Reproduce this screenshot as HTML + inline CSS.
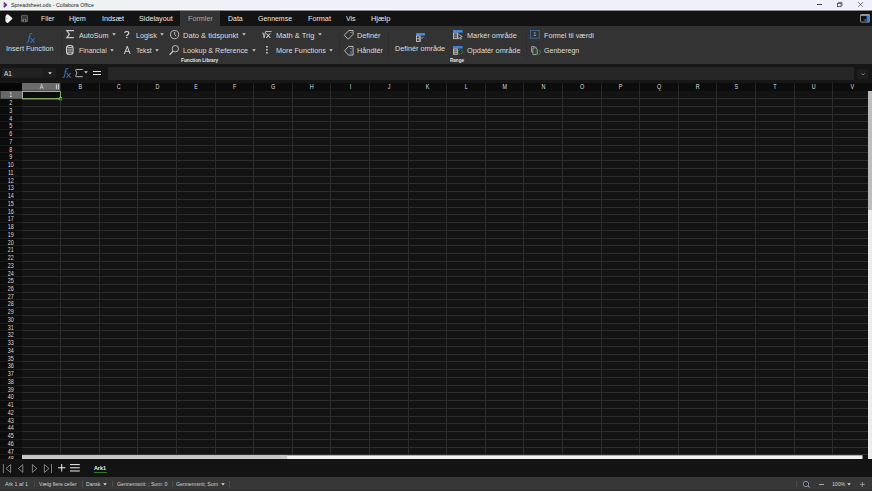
<!DOCTYPE html><html><head><meta charset="utf-8"><style>
*{margin:0;padding:0;box-sizing:border-box}
html,body{width:872px;height:491px;overflow:hidden;background:#131313;font-family:"Liberation Sans",sans-serif}
.a{position:absolute;white-space:nowrap;line-height:1;transform-origin:0 0}
.hd{font-family:"Liberation Sans",sans-serif;font-size:6.8px;fill:#dcdcdc}
.rn{font-family:"Liberation Sans",sans-serif;font-size:6.3px;fill:#dedede}
.sep{position:absolute;width:1px;background:#2e2e2e}
svg.i{position:absolute;overflow:visible}
</style></head><body>
<svg width="872" height="491" style="position:absolute;left:0;top:0"><rect x="22" y="91" width="846" height="368" fill="#131313"/><rect x="22" y="98" width="846" height="1" fill="#2d2d2d"/><rect x="22" y="106" width="846" height="1" fill="#2d2d2d"/><rect x="22" y="114" width="846" height="1" fill="#2d2d2d"/><rect x="22" y="121" width="846" height="1" fill="#2d2d2d"/><rect x="22" y="129" width="846" height="1" fill="#2d2d2d"/><rect x="22" y="137" width="846" height="1" fill="#2d2d2d"/><rect x="22" y="145" width="846" height="1" fill="#2d2d2d"/><rect x="22" y="152" width="846" height="1" fill="#2d2d2d"/><rect x="22" y="160" width="846" height="1" fill="#2d2d2d"/><rect x="22" y="168" width="846" height="1" fill="#2d2d2d"/><rect x="22" y="176" width="846" height="1" fill="#2d2d2d"/><rect x="22" y="183" width="846" height="1" fill="#2d2d2d"/><rect x="22" y="191" width="846" height="1" fill="#2d2d2d"/><rect x="22" y="199" width="846" height="1" fill="#2d2d2d"/><rect x="22" y="207" width="846" height="1" fill="#2d2d2d"/><rect x="22" y="214" width="846" height="1" fill="#2d2d2d"/><rect x="22" y="222" width="846" height="1" fill="#2d2d2d"/><rect x="22" y="230" width="846" height="1" fill="#2d2d2d"/><rect x="22" y="238" width="846" height="1" fill="#2d2d2d"/><rect x="22" y="245" width="846" height="1" fill="#2d2d2d"/><rect x="22" y="253" width="846" height="1" fill="#2d2d2d"/><rect x="22" y="261" width="846" height="1" fill="#2d2d2d"/><rect x="22" y="269" width="846" height="1" fill="#2d2d2d"/><rect x="22" y="276" width="846" height="1" fill="#2d2d2d"/><rect x="22" y="284" width="846" height="1" fill="#2d2d2d"/><rect x="22" y="292" width="846" height="1" fill="#2d2d2d"/><rect x="22" y="299" width="846" height="1" fill="#2d2d2d"/><rect x="22" y="307" width="846" height="1" fill="#2d2d2d"/><rect x="22" y="315" width="846" height="1" fill="#2d2d2d"/><rect x="22" y="323" width="846" height="1" fill="#2d2d2d"/><rect x="22" y="330" width="846" height="1" fill="#2d2d2d"/><rect x="22" y="338" width="846" height="1" fill="#2d2d2d"/><rect x="22" y="346" width="846" height="1" fill="#2d2d2d"/><rect x="22" y="354" width="846" height="1" fill="#2d2d2d"/><rect x="22" y="361" width="846" height="1" fill="#2d2d2d"/><rect x="22" y="369" width="846" height="1" fill="#2d2d2d"/><rect x="22" y="377" width="846" height="1" fill="#2d2d2d"/><rect x="22" y="385" width="846" height="1" fill="#2d2d2d"/><rect x="22" y="392" width="846" height="1" fill="#2d2d2d"/><rect x="22" y="400" width="846" height="1" fill="#2d2d2d"/><rect x="22" y="408" width="846" height="1" fill="#2d2d2d"/><rect x="22" y="416" width="846" height="1" fill="#2d2d2d"/><rect x="22" y="423" width="846" height="1" fill="#2d2d2d"/><rect x="22" y="431" width="846" height="1" fill="#2d2d2d"/><rect x="22" y="439" width="846" height="1" fill="#2d2d2d"/><rect x="22" y="447" width="846" height="1" fill="#2d2d2d"/><rect x="22" y="454" width="846" height="1" fill="#2d2d2d"/><rect x="60" y="91" width="1" height="368" fill="#2d2d2d"/><rect x="99" y="91" width="1" height="368" fill="#2d2d2d"/><rect x="137" y="91" width="1" height="368" fill="#2d2d2d"/><rect x="176" y="91" width="1" height="368" fill="#2d2d2d"/><rect x="215" y="91" width="1" height="368" fill="#2d2d2d"/><rect x="253" y="91" width="1" height="368" fill="#2d2d2d"/><rect x="292" y="91" width="1" height="368" fill="#2d2d2d"/><rect x="330" y="91" width="1" height="368" fill="#2d2d2d"/><rect x="369" y="91" width="1" height="368" fill="#2d2d2d"/><rect x="408" y="91" width="1" height="368" fill="#2d2d2d"/><rect x="446" y="91" width="1" height="368" fill="#2d2d2d"/><rect x="485" y="91" width="1" height="368" fill="#2d2d2d"/><rect x="523" y="91" width="1" height="368" fill="#2d2d2d"/><rect x="562" y="91" width="1" height="368" fill="#2d2d2d"/><rect x="601" y="91" width="1" height="368" fill="#2d2d2d"/><rect x="639" y="91" width="1" height="368" fill="#2d2d2d"/><rect x="678" y="91" width="1" height="368" fill="#2d2d2d"/><rect x="716" y="91" width="1" height="368" fill="#2d2d2d"/><rect x="755" y="91" width="1" height="368" fill="#2d2d2d"/><rect x="794" y="91" width="1" height="368" fill="#2d2d2d"/><rect x="832" y="91" width="1" height="368" fill="#2d2d2d"/><rect x="0" y="83" width="872" height="8" fill="#0c0c0c"/><rect x="0" y="83" width="22" height="8" fill="#060606"/><rect x="0" y="91" width="22" height="368" fill="#0c0c0c"/><rect x="22" y="83" width="38.60" height="7.7" fill="#6b6b6b"/><rect x="60" y="83" width="1" height="8" fill="#242424"/><rect x="99" y="83" width="1" height="8" fill="#242424"/><rect x="137" y="83" width="1" height="8" fill="#242424"/><rect x="176" y="83" width="1" height="8" fill="#242424"/><rect x="215" y="83" width="1" height="8" fill="#242424"/><rect x="253" y="83" width="1" height="8" fill="#242424"/><rect x="292" y="83" width="1" height="8" fill="#242424"/><rect x="330" y="83" width="1" height="8" fill="#242424"/><rect x="369" y="83" width="1" height="8" fill="#242424"/><rect x="408" y="83" width="1" height="8" fill="#242424"/><rect x="446" y="83" width="1" height="8" fill="#242424"/><rect x="485" y="83" width="1" height="8" fill="#242424"/><rect x="523" y="83" width="1" height="8" fill="#242424"/><rect x="562" y="83" width="1" height="8" fill="#242424"/><rect x="601" y="83" width="1" height="8" fill="#242424"/><rect x="639" y="83" width="1" height="8" fill="#242424"/><rect x="678" y="83" width="1" height="8" fill="#242424"/><rect x="716" y="83" width="1" height="8" fill="#242424"/><rect x="755" y="83" width="1" height="8" fill="#242424"/><rect x="794" y="83" width="1" height="8" fill="#242424"/><rect x="832" y="83" width="1" height="8" fill="#242424"/><rect x="0" y="98" width="22" height="1" fill="#1a1a1a"/><rect x="0" y="106" width="22" height="1" fill="#1a1a1a"/><rect x="0" y="114" width="22" height="1" fill="#1a1a1a"/><rect x="0" y="121" width="22" height="1" fill="#1a1a1a"/><rect x="0" y="129" width="22" height="1" fill="#1a1a1a"/><rect x="0" y="137" width="22" height="1" fill="#1a1a1a"/><rect x="0" y="145" width="22" height="1" fill="#1a1a1a"/><rect x="0" y="152" width="22" height="1" fill="#1a1a1a"/><rect x="0" y="160" width="22" height="1" fill="#1a1a1a"/><rect x="0" y="168" width="22" height="1" fill="#1a1a1a"/><rect x="0" y="176" width="22" height="1" fill="#1a1a1a"/><rect x="0" y="183" width="22" height="1" fill="#1a1a1a"/><rect x="0" y="191" width="22" height="1" fill="#1a1a1a"/><rect x="0" y="199" width="22" height="1" fill="#1a1a1a"/><rect x="0" y="207" width="22" height="1" fill="#1a1a1a"/><rect x="0" y="214" width="22" height="1" fill="#1a1a1a"/><rect x="0" y="222" width="22" height="1" fill="#1a1a1a"/><rect x="0" y="230" width="22" height="1" fill="#1a1a1a"/><rect x="0" y="238" width="22" height="1" fill="#1a1a1a"/><rect x="0" y="245" width="22" height="1" fill="#1a1a1a"/><rect x="0" y="253" width="22" height="1" fill="#1a1a1a"/><rect x="0" y="261" width="22" height="1" fill="#1a1a1a"/><rect x="0" y="269" width="22" height="1" fill="#1a1a1a"/><rect x="0" y="276" width="22" height="1" fill="#1a1a1a"/><rect x="0" y="284" width="22" height="1" fill="#1a1a1a"/><rect x="0" y="292" width="22" height="1" fill="#1a1a1a"/><rect x="0" y="299" width="22" height="1" fill="#1a1a1a"/><rect x="0" y="307" width="22" height="1" fill="#1a1a1a"/><rect x="0" y="315" width="22" height="1" fill="#1a1a1a"/><rect x="0" y="323" width="22" height="1" fill="#1a1a1a"/><rect x="0" y="330" width="22" height="1" fill="#1a1a1a"/><rect x="0" y="338" width="22" height="1" fill="#1a1a1a"/><rect x="0" y="346" width="22" height="1" fill="#1a1a1a"/><rect x="0" y="354" width="22" height="1" fill="#1a1a1a"/><rect x="0" y="361" width="22" height="1" fill="#1a1a1a"/><rect x="0" y="369" width="22" height="1" fill="#1a1a1a"/><rect x="0" y="377" width="22" height="1" fill="#1a1a1a"/><rect x="0" y="385" width="22" height="1" fill="#1a1a1a"/><rect x="0" y="392" width="22" height="1" fill="#1a1a1a"/><rect x="0" y="400" width="22" height="1" fill="#1a1a1a"/><rect x="0" y="408" width="22" height="1" fill="#1a1a1a"/><rect x="0" y="416" width="22" height="1" fill="#1a1a1a"/><rect x="0" y="423" width="22" height="1" fill="#1a1a1a"/><rect x="0" y="431" width="22" height="1" fill="#1a1a1a"/><rect x="0" y="439" width="22" height="1" fill="#1a1a1a"/><rect x="0" y="447" width="22" height="1" fill="#1a1a1a"/><rect x="0" y="454" width="22" height="1" fill="#1a1a1a"/><text x="0" y="89.1" text-anchor="middle" class="hd" transform="translate(41.60 0) scale(0.8 1)">A</text><text x="0" y="89.1" text-anchor="middle" class="hd" transform="translate(80.20 0) scale(0.8 1)">B</text><text x="0" y="89.1" text-anchor="middle" class="hd" transform="translate(118.80 0) scale(0.8 1)">C</text><text x="0" y="89.1" text-anchor="middle" class="hd" transform="translate(157.40 0) scale(0.8 1)">D</text><text x="0" y="89.1" text-anchor="middle" class="hd" transform="translate(196.00 0) scale(0.8 1)">E</text><text x="0" y="89.1" text-anchor="middle" class="hd" transform="translate(234.60 0) scale(0.8 1)">F</text><text x="0" y="89.1" text-anchor="middle" class="hd" transform="translate(273.20 0) scale(0.8 1)">G</text><text x="0" y="89.1" text-anchor="middle" class="hd" transform="translate(311.80 0) scale(0.8 1)">H</text><text x="0" y="89.1" text-anchor="middle" class="hd" transform="translate(350.40 0) scale(0.8 1)">I</text><text x="0" y="89.1" text-anchor="middle" class="hd" transform="translate(389.00 0) scale(0.8 1)">J</text><text x="0" y="89.1" text-anchor="middle" class="hd" transform="translate(427.60 0) scale(0.8 1)">K</text><text x="0" y="89.1" text-anchor="middle" class="hd" transform="translate(466.20 0) scale(0.8 1)">L</text><text x="0" y="89.1" text-anchor="middle" class="hd" transform="translate(504.80 0) scale(0.8 1)">M</text><text x="0" y="89.1" text-anchor="middle" class="hd" transform="translate(543.40 0) scale(0.8 1)">N</text><text x="0" y="89.1" text-anchor="middle" class="hd" transform="translate(582.00 0) scale(0.8 1)">O</text><text x="0" y="89.1" text-anchor="middle" class="hd" transform="translate(620.60 0) scale(0.8 1)">P</text><text x="0" y="89.1" text-anchor="middle" class="hd" transform="translate(659.20 0) scale(0.8 1)">Q</text><text x="0" y="89.1" text-anchor="middle" class="hd" transform="translate(697.80 0) scale(0.8 1)">R</text><text x="0" y="89.1" text-anchor="middle" class="hd" transform="translate(736.40 0) scale(0.8 1)">S</text><text x="0" y="89.1" text-anchor="middle" class="hd" transform="translate(775.00 0) scale(0.8 1)">T</text><text x="0" y="89.1" text-anchor="middle" class="hd" transform="translate(813.60 0) scale(0.8 1)">U</text><text x="0" y="89.1" text-anchor="middle" class="hd" transform="translate(852.20 0) scale(0.8 1)">V</text><text x="0" y="97.50" text-anchor="middle" class="rn" transform="translate(10.7 0) scale(0.86 1)">1</text><text x="0" y="105.24" text-anchor="middle" class="rn" transform="translate(10.7 0) scale(0.86 1)">2</text><text x="0" y="112.98" text-anchor="middle" class="rn" transform="translate(10.7 0) scale(0.86 1)">3</text><text x="0" y="120.72" text-anchor="middle" class="rn" transform="translate(10.7 0) scale(0.86 1)">4</text><text x="0" y="128.46" text-anchor="middle" class="rn" transform="translate(10.7 0) scale(0.86 1)">5</text><text x="0" y="136.20" text-anchor="middle" class="rn" transform="translate(10.7 0) scale(0.86 1)">6</text><text x="0" y="143.94" text-anchor="middle" class="rn" transform="translate(10.7 0) scale(0.86 1)">7</text><text x="0" y="151.68" text-anchor="middle" class="rn" transform="translate(10.7 0) scale(0.86 1)">8</text><text x="0" y="159.42" text-anchor="middle" class="rn" transform="translate(10.7 0) scale(0.86 1)">9</text><text x="0" y="167.16" text-anchor="middle" class="rn" transform="translate(10.7 0) scale(0.86 1)">10</text><text x="0" y="174.90" text-anchor="middle" class="rn" transform="translate(10.7 0) scale(0.86 1)">11</text><text x="0" y="182.64" text-anchor="middle" class="rn" transform="translate(10.7 0) scale(0.86 1)">12</text><text x="0" y="190.38" text-anchor="middle" class="rn" transform="translate(10.7 0) scale(0.86 1)">13</text><text x="0" y="198.12" text-anchor="middle" class="rn" transform="translate(10.7 0) scale(0.86 1)">14</text><text x="0" y="205.86" text-anchor="middle" class="rn" transform="translate(10.7 0) scale(0.86 1)">15</text><text x="0" y="213.60" text-anchor="middle" class="rn" transform="translate(10.7 0) scale(0.86 1)">16</text><text x="0" y="221.34" text-anchor="middle" class="rn" transform="translate(10.7 0) scale(0.86 1)">17</text><text x="0" y="229.08" text-anchor="middle" class="rn" transform="translate(10.7 0) scale(0.86 1)">18</text><text x="0" y="236.82" text-anchor="middle" class="rn" transform="translate(10.7 0) scale(0.86 1)">19</text><text x="0" y="244.56" text-anchor="middle" class="rn" transform="translate(10.7 0) scale(0.86 1)">20</text><text x="0" y="252.30" text-anchor="middle" class="rn" transform="translate(10.7 0) scale(0.86 1)">21</text><text x="0" y="260.04" text-anchor="middle" class="rn" transform="translate(10.7 0) scale(0.86 1)">22</text><text x="0" y="267.78" text-anchor="middle" class="rn" transform="translate(10.7 0) scale(0.86 1)">23</text><text x="0" y="275.52" text-anchor="middle" class="rn" transform="translate(10.7 0) scale(0.86 1)">24</text><text x="0" y="283.26" text-anchor="middle" class="rn" transform="translate(10.7 0) scale(0.86 1)">25</text><text x="0" y="291.00" text-anchor="middle" class="rn" transform="translate(10.7 0) scale(0.86 1)">26</text><text x="0" y="298.74" text-anchor="middle" class="rn" transform="translate(10.7 0) scale(0.86 1)">27</text><text x="0" y="306.48" text-anchor="middle" class="rn" transform="translate(10.7 0) scale(0.86 1)">28</text><text x="0" y="314.22" text-anchor="middle" class="rn" transform="translate(10.7 0) scale(0.86 1)">29</text><text x="0" y="321.96" text-anchor="middle" class="rn" transform="translate(10.7 0) scale(0.86 1)">30</text><text x="0" y="329.70" text-anchor="middle" class="rn" transform="translate(10.7 0) scale(0.86 1)">31</text><text x="0" y="337.44" text-anchor="middle" class="rn" transform="translate(10.7 0) scale(0.86 1)">32</text><text x="0" y="345.18" text-anchor="middle" class="rn" transform="translate(10.7 0) scale(0.86 1)">33</text><text x="0" y="352.92" text-anchor="middle" class="rn" transform="translate(10.7 0) scale(0.86 1)">34</text><text x="0" y="360.66" text-anchor="middle" class="rn" transform="translate(10.7 0) scale(0.86 1)">35</text><text x="0" y="368.40" text-anchor="middle" class="rn" transform="translate(10.7 0) scale(0.86 1)">36</text><text x="0" y="376.14" text-anchor="middle" class="rn" transform="translate(10.7 0) scale(0.86 1)">37</text><text x="0" y="383.88" text-anchor="middle" class="rn" transform="translate(10.7 0) scale(0.86 1)">38</text><text x="0" y="391.62" text-anchor="middle" class="rn" transform="translate(10.7 0) scale(0.86 1)">39</text><text x="0" y="399.36" text-anchor="middle" class="rn" transform="translate(10.7 0) scale(0.86 1)">40</text><text x="0" y="407.10" text-anchor="middle" class="rn" transform="translate(10.7 0) scale(0.86 1)">41</text><text x="0" y="414.84" text-anchor="middle" class="rn" transform="translate(10.7 0) scale(0.86 1)">42</text><text x="0" y="422.58" text-anchor="middle" class="rn" transform="translate(10.7 0) scale(0.86 1)">43</text><text x="0" y="430.32" text-anchor="middle" class="rn" transform="translate(10.7 0) scale(0.86 1)">44</text><text x="0" y="438.06" text-anchor="middle" class="rn" transform="translate(10.7 0) scale(0.86 1)">45</text><text x="0" y="445.80" text-anchor="middle" class="rn" transform="translate(10.7 0) scale(0.86 1)">46</text><text x="0" y="453.54" text-anchor="middle" class="rn" transform="translate(10.7 0) scale(0.86 1)">47</text><text x="0" y="461.28" text-anchor="middle" class="rn" transform="translate(10.7 0) scale(0.86 1)">48</text><rect x="55.9" y="84.3" width="1.1" height="4.8" fill="#c8c8c8"/><rect x="57.9" y="84.3" width="1.1" height="4.8" fill="#c8c8c8"/><rect x="0.5" y="91" width="21.5" height="7.8" fill="#686868"/><text x="0" y="97.50" text-anchor="middle" class="rn" transform="translate(10.7 0) scale(0.86 1)">1</text><rect x="22" y="91" width="38.6" height="8" fill="#0b0b0b"/><rect x="22" y="91" width="38.6" height="1" fill="#a7aba4"/><rect x="22" y="91" width="1" height="7.5" fill="#a7aba4"/><rect x="60" y="91.6" width="1" height="6.6" fill="#86ae70"/><rect x="22" y="98" width="38" height="1" fill="#7fa868"/><rect x="22" y="99" width="38" height="1" fill="#2f6a20"/><rect x="58.9" y="97.1" width="3.3" height="3.4" rx="0.6" fill="#2a7a1a"/><path d="M59.2 100.2 V97.9 Q59.2 97.4 59.8 97.4 H62" fill="none" stroke="#c9cfc6" stroke-width="0.6"/><rect x="868" y="91" width="4" height="368" fill="#ececec"/><rect x="868" y="91" width="4" height="119" fill="#bdbdbd"/><rect x="22" y="455.3" width="840.5" height="3.7" fill="#f2f2f2"/><rect x="22" y="455.3" width="265.2" height="3.7" fill="#c6c9c6"/></svg>
<div class="a" style="left:0;top:0;width:872px;height:10px;background:linear-gradient(90deg,#edf2ee 0%,#eef2f5 14%,#eef1fa 45%,#eef1fb 100%)"></div>
<div class="a" style="left:0;top:9px;width:872px;height:1px;background:#f6f8fc"></div>
<div class="a" style="left:0;top:10px;width:872px;height:1px;background:#8a8a8a"></div>
<svg class="i" style="left:2.5px;top:2px" width="5" height="6" viewBox="0 0 5 6"><path d="M1.3 0.1 L4.5 2.95 L1.3 5.8 L0.3 4.7 L1.4 2.95 L0.3 1.2 Z" fill="#6a2a92"/><path d="M0.4 1.3 L1.5 2.95 L0.4 4.6 Z" fill="#b7b0c2"/></svg>
<div class="a" style="left:10.90px;top:1.90px;font-size:6.2px;color:#1e1e1e;transform:scaleX(0.859);">Spreadsheet.ods - Collabora Office</div>
<div class="a" style="left:817px;top:4.1px;width:5px;height:0.8px;background:#444"></div>
<svg class="i" style="left:837px;top:2.4px" width="6" height="5" viewBox="0 0 6 5"><rect x="0.45" y="1.35" width="3.6" height="3.3" fill="none" stroke="#444" stroke-width="0.8"/><path d="M1.4 0.9 V0.45 H5.1 V3.7 H4.6" fill="none" stroke="#444" stroke-width="0.7"/></svg>
<svg class="i" style="left:858.2px;top:2.3px" width="5" height="5" viewBox="0 0 5 5"><path d="M0.2 0.2 L4.8 4.8 M4.8 0.2 L0.2 4.8" stroke="#444" stroke-width="0.7"/></svg>
<div class="a" style="left:0;top:11px;width:872px;height:15px;background:#131313"></div>
<svg class="i" style="left:5px;top:13.7px" width="8" height="9.2" viewBox="0 0 8 9.2"><path d="M2 0.3 Q2.6 0 3.2 0.5 L7.2 4 Q7.6 4.6 7.2 5.1 L3.2 8.7 Q2.6 9.2 2 8.9 L0.6 7.2 Q0.2 4.6 0.6 2 Z" fill="#f5f5f5"/><path d="M1.4 3.6 L2.8 4.6 L1.4 5.6 Z" fill="#a8a8a8"/></svg>
<svg class="i" style="left:21.3px;top:14.7px" width="7" height="7.2" viewBox="0 0 7 7.2"><rect x="0.4" y="0.4" width="6.2" height="6.4" rx="0.6" fill="#3c3c3c" stroke="#6a6a6a" stroke-width="0.8"/><rect x="1.6" y="1.3" width="3.8" height="1.4" rx="0.6" fill="#111" stroke="#777" stroke-width="0.4"/><rect x="1.5" y="4.2" width="4" height="2.4" fill="#777"/><rect x="3.1" y="4.6" width="0.9" height="1.9" fill="#111"/></svg>
<div class="a" style="left:180.4px;top:10.6px;width:39.2px;height:15.4px;background:#333333"></div>
<div class="a" style="left:40.50px;top:14.75px;font-size:7.5px;color:#e8e8e8;transform:scaleX(0.905);">Filer</div>
<div class="a" style="left:69.30px;top:14.75px;font-size:7.5px;color:#e8e8e8;transform:scaleX(0.960);">Hjem</div>
<div class="a" style="left:101.60px;top:14.75px;font-size:7.5px;color:#e8e8e8;transform:scaleX(0.964);">Indsæt</div>
<div class="a" style="left:139.10px;top:14.75px;font-size:7.5px;color:#e8e8e8;transform:scaleX(0.965);">Sidelayout</div>
<div class="a" style="left:187.80px;top:14.75px;font-size:7.5px;color:#a8a8a8;transform:scaleX(0.964);">Formler</div>
<div class="a" style="left:228.30px;top:14.75px;font-size:7.5px;color:#e8e8e8;transform:scaleX(0.928);">Data</div>
<div class="a" style="left:258.30px;top:14.75px;font-size:7.5px;color:#e8e8e8;transform:scaleX(0.927);">Gennemse</div>
<div class="a" style="left:307.90px;top:14.75px;font-size:7.5px;color:#e8e8e8;transform:scaleX(0.964);">Format</div>
<div class="a" style="left:346.00px;top:14.75px;font-size:7.5px;color:#e8e8e8;transform:scaleX(0.934);">Vis</div>
<div class="a" style="left:370.60px;top:14.75px;font-size:7.5px;color:#e8e8e8;transform:scaleX(0.990);">Hjælp</div>
<svg class="i" style="left:860.3px;top:14px" width="10" height="8.6" viewBox="0 0 10 8.6"><rect x="0.5" y="0.5" width="9" height="7.6" rx="0.6" fill="#111" stroke="#8c8c8c" stroke-width="1"/><rect x="0.5" y="0.5" width="9" height="1.4" fill="#a0a0a0"/><rect x="6.6" y="2" width="2.9" height="6.1" fill="#3f7fd8"/><path d="M3.8 6 H6 M5 5 L6 6 L5 7" stroke="#3f7fd8" stroke-width="0.7" fill="none"/></svg>
<div class="a" style="left:0;top:26px;width:872px;height:38px;background:#333333"></div>
<div class="sep" style="left:60.5px;top:29.5px;height:30px"></div>
<div class="sep" style="left:338.6px;top:29.5px;height:30px"></div>
<div class="sep" style="left:388px;top:29.5px;height:30px"></div>
<div class="sep" style="left:525.7px;top:29.5px;height:30px"></div>
<svg class="i" style="left:25.6px;top:33.1px" width="9" height="10" viewBox="0 0 9 10"><path d="M6 1.1 Q5.6 0.3 4.8 0.5 Q4 0.8 3.8 1.8 L2.5 8.2 Q2.1 9.7 0.4 9.2" fill="none" stroke="#3a6eb0" stroke-width="1.05"/><path d="M2.6 3.7 H5" stroke="#3a6eb0" stroke-width="0.7"/><path d="M4.7 5 L8.6 9.6 M8.8 5 L4.6 9.6" stroke="#3a6eb0" stroke-width="1.1"/></svg>
<div class="a" style="left:5.85px;top:45.35px;font-size:7.5px;color:#dedede;transform:scaleX(0.957);">Insert Function</div>
<div class="a" style="left:78.60px;top:31.57px;font-size:7.6px;color:#dedede;transform:scaleX(0.944);">AutoSum</div>
<svg class="i" style="left:111.6px;top:33.4px" width="4" height="3" viewBox="0 0 4 3"><path d="M0.2 0.3 H3.8 L2 2.4 Z" fill="#d4d4d4"/></svg>
<div class="a" style="left:135.70px;top:31.57px;font-size:7.6px;color:#dedede;transform:scaleX(0.946);">Logisk</div>
<svg class="i" style="left:159.5px;top:33.4px" width="4" height="3" viewBox="0 0 4 3"><path d="M0.2 0.3 H3.8 L2 2.4 Z" fill="#d4d4d4"/></svg>
<div class="a" style="left:183.30px;top:31.57px;font-size:7.6px;color:#dedede;transform:scaleX(0.995);">Dato &amp; tidspunkt</div>
<svg class="i" style="left:242.2px;top:33.4px" width="4" height="3" viewBox="0 0 4 3"><path d="M0.2 0.3 H3.8 L2 2.4 Z" fill="#d4d4d4"/></svg>
<div class="a" style="left:275.80px;top:31.57px;font-size:7.6px;color:#dedede;transform:scaleX(0.991);">Math &amp; Trig</div>
<svg class="i" style="left:318.2px;top:33.4px" width="4" height="3" viewBox="0 0 4 3"><path d="M0.2 0.3 H3.8 L2 2.4 Z" fill="#d4d4d4"/></svg>
<div class="a" style="left:357.00px;top:31.57px;font-size:7.6px;color:#dedede;transform:scaleX(0.955);">Definér</div>
<div class="a" style="left:466.50px;top:31.57px;font-size:7.6px;color:#dedede;transform:scaleX(0.966);">Markér område</div>
<div class="a" style="left:544.00px;top:31.57px;font-size:7.6px;color:#dedede;transform:scaleX(0.951);">Formel til værdi</div>
<div class="a" style="left:78.70px;top:46.57px;font-size:7.6px;color:#dedede;transform:scaleX(0.914);">Financial</div>
<svg class="i" style="left:110.2px;top:48.6px" width="4" height="3" viewBox="0 0 4 3"><path d="M0.2 0.3 H3.8 L2 2.4 Z" fill="#d4d4d4"/></svg>
<div class="a" style="left:135.70px;top:46.57px;font-size:7.6px;color:#dedede;transform:scaleX(0.885);">Tekst</div>
<svg class="i" style="left:155px;top:48.6px" width="4" height="3" viewBox="0 0 4 3"><path d="M0.2 0.3 H3.8 L2 2.4 Z" fill="#d4d4d4"/></svg>
<div class="a" style="left:183.30px;top:46.57px;font-size:7.6px;color:#dedede;transform:scaleX(0.938);">Lookup &amp; Reference</div>
<svg class="i" style="left:252.3px;top:48.6px" width="4" height="3" viewBox="0 0 4 3"><path d="M0.2 0.3 H3.8 L2 2.4 Z" fill="#d4d4d4"/></svg>
<div class="a" style="left:275.80px;top:46.57px;font-size:7.6px;color:#dedede;transform:scaleX(0.951);">More Functions</div>
<svg class="i" style="left:329.3px;top:48.6px" width="4" height="3" viewBox="0 0 4 3"><path d="M0.2 0.3 H3.8 L2 2.4 Z" fill="#d4d4d4"/></svg>
<div class="a" style="left:357.00px;top:46.57px;font-size:7.6px;color:#dedede;transform:scaleX(0.962);">Håndtér</div>
<div class="a" style="left:466.50px;top:46.57px;font-size:7.6px;color:#dedede;transform:scaleX(0.967);">Opdatér område</div>
<div class="a" style="left:544.00px;top:46.57px;font-size:7.6px;color:#dedede;transform:scaleX(0.928);">Genberegn</div>
<div class="a" style="left:395.20px;top:44.87px;font-size:7.6px;color:#dedede;transform:scaleX(0.958);">Definér område</div>
<div class="a" style="left:180.80px;top:58.07px;font-size:5.0px;color:#e6e6e6;font-weight:bold;transform:scaleX(0.943);">Function Library</div>
<div class="a" style="left:450.00px;top:58.07px;font-size:5.0px;color:#e6e6e6;font-weight:bold;transform:scaleX(0.916);">Range</div>
<svg class="i" style="left:65.8px;top:30.4px" width="8.2" height="8.3" viewBox="0 0 8.2 8.3"><path d="M7.9 0.7 H0.8 L3.4 4.15 L0.8 7.6 H7.9" fill="none" stroke="#c6c6c6" stroke-width="1.2"/></svg>
<svg class="i" style="left:66px;top:45px" width="7.6" height="9.8" viewBox="0 0 7.6 9.8"><rect x="0.55" y="0.55" width="6.5" height="8.7" rx="2.6" fill="none" stroke="#dadada" stroke-width="1.1"/><path d="M1.6 2.7 H6 M1.6 4.9 H6 M1.6 7.1 H6" stroke="#d2d2d2" stroke-width="1"/></svg>
<svg class="i" style="left:123.8px;top:31px" width="5.6" height="7.4" viewBox="0 0 5.6 7.4"><path d="M0.7 2 Q0.8 0.5 2.8 0.5 Q4.9 0.5 4.9 2.1 Q4.9 3.2 3.6 3.8 Q2.8 4.2 2.8 5.2" fill="none" stroke="#e6e6e6" stroke-width="1.1"/><circle cx="2.8" cy="6.7" r="0.65" fill="#e6e6e6"/></svg>
<svg class="i" style="left:123.5px;top:45.9px" width="6.5" height="8" viewBox="0 0 6.5 8"><path d="M0.4 7.9 L3.25 0.3 L6.1 7.9 M1.4 5.3 H5.1" fill="none" stroke="#e6e6e6" stroke-width="0.9"/></svg>
<svg class="i" style="left:170px;top:29.8px" width="9.2" height="9.2" viewBox="0 0 9.2 9.2"><circle cx="4.6" cy="4.6" r="4.1" fill="none" stroke="#c8c8c8" stroke-width="0.9"/><path d="M4.6 1.9 V4.6 L6.2 6" fill="none" stroke="#c8c8c8" stroke-width="0.9"/></svg>
<svg class="i" style="left:169px;top:44.9px" width="9.8" height="10.3" viewBox="0 0 9.8 10.3"><circle cx="6.3" cy="3.7" r="3.2" fill="none" stroke="#c8c8c8" stroke-width="0.9"/><path d="M4.1 6.1 L0.6 9.7" stroke="#c8c8c8" stroke-width="1.3"/></svg>
<svg class="i" style="left:262px;top:31px" width="9.8" height="7.4" viewBox="0 0 9.8 7.4"><path d="M0.3 2.3 L1.1 1.8 L2.1 6.9 L3.6 0.5 H9.6" fill="none" stroke="#c8c8c8" stroke-width="0.9"/><path d="M4.3 2.4 L8.3 7 M8.3 2.4 L4.3 7" stroke="#e0e0e0" stroke-width="1"/></svg>
<svg class="i" style="left:266.1px;top:46.1px" width="2.2" height="8" viewBox="0 0 2.2 8"><rect x="0" y="0" width="1.8" height="1.5" fill="#c4c4c4"/><rect x="0" y="3" width="1.8" height="1.5" fill="#c4c4c4"/><rect x="0" y="6" width="1.8" height="1.5" fill="#c4c4c4"/></svg>
<svg class="i" style="left:343.8px;top:29.7px" width="9.6" height="9.8" viewBox="0 0 9.6 9.8"><path d="M9.1 0.5 L9.1 4.3 L4.6 8.9 Q4.2 9.3 3.8 8.9 L0.5 5.6 Q0.1 5.2 0.5 4.8 L4.9 0.5 Z" fill="none" stroke="#c8c8c8" stroke-width="0.9"/><circle cx="7" cy="2.5" r="0.6" fill="#c8c8c8"/></svg>
<svg class="i" style="left:343.8px;top:45.6px" width="9.6" height="9.6" viewBox="0 0 9.6 9.6"><path d="M9.1 0.5 V9.1 H4.6 L0.5 4.8 L4.6 0.5 Z" fill="none" stroke="#c8c8c8" stroke-width="0.9"/><rect x="5.8" y="4.8" width="2.2" height="3.3" fill="#30629e"/><circle cx="6.9" cy="2.6" r="0.6" fill="#c8c8c8"/></svg>
<svg class="i" style="left:416px;top:33.3px" width="9.3" height="9.2" viewBox="0 0 9.3 9.2"><rect x="0" y="0" width="9" height="2.6" fill="#3f7fd8"/><path d="M1 1.1 H2.8 M3.8 1.1 H5.6 M6.6 1.1 H8.2" stroke="#8fb8ee" stroke-width="0.5"/><rect x="0.4" y="2.9" width="2.8" height="5.6" fill="none" stroke="#d6d6d6" stroke-width="0.8"/><path d="M0.4 5.7 H3.2" stroke="#d6d6d6" stroke-width="0.7"/><path d="M4.3 2.6 V9" stroke="#c8c8c8" stroke-width="0.8"/><path d="M5 4.3 H9 L7.6 5.1 L5 5.9 Z" fill="#3f7fd8"/></svg>
<svg class="i" style="left:452.9px;top:30.4px" width="9.9" height="9.5" viewBox="0 0 9.9 9.5"><rect x="0" y="0" width="9.6" height="2.7" fill="#3f7fd8"/><path d="M1 1.2 H2.8 M3.9 1.2 H5.7 M6.8 1.2 H8.6" stroke="#90b9ee" stroke-width="0.5"/><rect x="0.4" y="3.1" width="4.2" height="5.6" fill="none" stroke="#c8c8c8" stroke-width="0.8"/><path d="M0.4 5 H4.6 M0.4 6.9 H4.6" stroke="#c8c8c8" stroke-width="0.7"/><path d="M4.6 3.6 L9.3 6.6 L7.3 7.1 L8.5 9 L7.6 9.4 L6.5 7.6 L5 9 Z" fill="#333" stroke="#d0d0d0" stroke-width="0.7"/></svg>
<svg class="i" style="left:452.9px;top:46.2px" width="9.9" height="8.8" viewBox="0 0 9.9 8.8"><rect x="0" y="0" width="9.6" height="2.5" fill="#3f7fd8"/><rect x="0.4" y="2.9" width="4.2" height="5.4" fill="#555" stroke="#c8c8c8" stroke-width="0.8"/><path d="M0.4 4.8 H4.6 M0.4 6.6 H4.6" stroke="#c8c8c8" stroke-width="0.7"/><circle cx="7.2" cy="5.9" r="2.3" fill="none" stroke="#2f8a35" stroke-width="0.9" stroke-dasharray="2.5 1.1"/></svg>
<svg class="i" style="left:530px;top:30px" width="9.8" height="8.7" viewBox="0 0 9.8 8.7"><rect x="0.5" y="0.5" width="8.8" height="7.7" fill="none" stroke="#3f6a98" stroke-width="0.9"/><text x="4.9" y="6.1" text-anchor="middle" font-family="Liberation Sans" font-size="4.6" fill="#c8c8c8">1</text></svg>
<svg class="i" style="left:530.8px;top:45.9px" width="9.8" height="9.3" viewBox="0 0 9.8 9.3"><path d="M0.5 0.5 H3.8 L5 1.7 V6 H0.5 Z" fill="none" stroke="#a8a8a8" stroke-width="0.8"/><path d="M1.9 1.9 H5 L6.2 3 V8.6 H1.9 Z" fill="#333" stroke="#b8b8b8" stroke-width="0.8"/><circle cx="6.8" cy="6.3" r="2.4" fill="none" stroke="#2f8a35" stroke-width="1" stroke-dasharray="2.6 1.1"/></svg>
<div class="a" style="left:0;top:64px;width:872px;height:19px;background:#161616"></div>
<div class="a" style="left:2.3px;top:68.2px;width:53.5px;height:9.6px;background:#212121;border-radius:1px"></div>
<div class="a" style="left:42px;top:68.2px;width:13.8px;height:9.6px;background:#1d1d1d;border-radius:1px"></div>
<div class="a" style="left:4.20px;top:70.05px;font-size:7.5px;color:#e4e4e4;transform:scaleX(0.850);">A1</div>
<svg class="i" style="left:47.6px;top:72.2px" width="4" height="3" viewBox="0 0 4 3"><path d="M0.2 0.3 H3.8 L2 2.4 Z" fill="#e8e8e8"/></svg>
<svg class="i" style="left:62px;top:68.1px" width="9" height="10" viewBox="0 0 9 10"><path d="M6 1.1 Q5.6 0.3 4.8 0.5 Q4 0.8 3.8 1.8 L2.5 8.2 Q2.1 9.7 0.4 9.2" fill="none" stroke="#3a6eb0" stroke-width="1.05"/><path d="M2.6 3.7 H5" stroke="#3a6eb0" stroke-width="0.7"/><path d="M4.7 5 L8.6 9.6 M8.8 5 L4.6 9.6" stroke="#3a6eb0" stroke-width="1.1"/></svg>
<svg class="i" style="left:74.9px;top:69px" width="8" height="8.2" viewBox="0 0 8 8.2"><path d="M7.8 0.5 H1.2 Q0.4 0.5 0.8 1.5 L1.9 4.1 L0.8 6.7 Q0.4 7.7 1.2 7.7 H7.8" fill="none" stroke="#bdbdbd" stroke-width="0.95"/></svg>
<svg class="i" style="left:83.8px;top:71.3px" width="4" height="3" viewBox="0 0 4 3"><path d="M0.2 0.3 H3.8 L2 2.4 Z" fill="#d8d8d8"/></svg>
<div class="a" style="left:93.3px;top:71.3px;width:7.4px;height:0.9px;background:#e0e0e0"></div>
<div class="a" style="left:93.3px;top:74.2px;width:7.4px;height:0.9px;background:#e0e0e0"></div>
<div class="a" style="left:107.7px;top:67.2px;width:746.5px;height:12.5px;background:#262626;border-radius:1px"></div>
<div class="a" style="left:857.1px;top:68.7px;width:10.7px;height:10.7px;background:#1e1e1e;border-radius:1.5px"></div>
<svg class="i" style="left:860.6px;top:72.9px" width="4" height="3" viewBox="0 0 4 3"><path d="M0.4 0.4 L2 2 L3.6 0.4" fill="none" stroke="#b8b8b8" stroke-width="0.6"/></svg>
<div class="a" style="left:0;top:459.1px;width:872px;height:17.9px;background:#131313"></div>
<svg class="i" style="left:3px;top:463.8px" width="8" height="9" viewBox="0 0 8 9"><path d="M0.4 0 V9" stroke="#9c9c9c" stroke-width="0.8"/><path d="M7.6 0.6 L3 4.5 L7.6 8.4 Z" fill="none" stroke="#9c9c9c" stroke-width="0.8"/></svg>
<svg class="i" style="left:18px;top:463.8px" width="5.2" height="9" viewBox="0 0 5.2 9"><path d="M4.8 0.6 L0.4 4.5 L4.8 8.4 Z" fill="none" stroke="#9c9c9c" stroke-width="0.8"/></svg>
<svg class="i" style="left:31.5px;top:463.8px" width="5.2" height="9" viewBox="0 0 5.2 9"><path d="M0.4 0.6 L4.8 4.5 L0.4 8.4 Z" fill="none" stroke="#9c9c9c" stroke-width="0.8"/></svg>
<svg class="i" style="left:43.6px;top:463.8px" width="8" height="9" viewBox="0 0 8 9"><path d="M7.5 0 V9" stroke="#9c9c9c" stroke-width="0.8"/><path d="M0.4 0.6 L5 4.5 L0.4 8.4 Z" fill="none" stroke="#9c9c9c" stroke-width="0.8"/></svg>
<svg class="i" style="left:57.5px;top:464.4px" width="7.4" height="7.5" viewBox="0 0 7.4 7.5"><path d="M3.7 0 V7.5 M0 3.75 H7.4" stroke="#f0f0f0" stroke-width="1"/></svg>
<svg class="i" style="left:70px;top:464.4px" width="9.8" height="7.6" viewBox="0 0 9.8 7.6"><path d="M0 0.6 H9.8 M0 3.8 H9.8 M0 7 H9.8" stroke="#f0f0f0" stroke-width="1"/></svg>
<div class="a" style="left:94.40px;top:465.89px;font-size:5.8px;color:#f2f2f2;font-weight:bold;transform:scaleX(0.923);">Ark1</div>
<div class="a" style="left:94px;top:472px;width:12.6px;height:0.9px;background:#2f7a22"></div>
<div class="a" style="left:0;top:477px;width:872px;height:14px;background:#373737"></div>
<div class="a" style="left:0;top:490px;width:872px;height:1px;background:#2c2c2c"></div>
<div class="a" style="left:5.20px;top:481.45px;font-size:6.2px;color:#d2d2d2;transform:scaleX(0.867);">Ark 1 af 1</div>
<div class="a" style="left:38.50px;top:481.45px;font-size:6.2px;color:#d2d2d2;transform:scaleX(0.844);">Vælg flere celler</div>
<div class="a" style="left:86.00px;top:481.45px;font-size:6.2px;color:#d2d2d2;transform:scaleX(0.819);">Dansk</div>
<div class="a" style="left:116.50px;top:481.45px;font-size:6.2px;color:#d2d2d2;transform:scaleX(0.842);">Gennemsnit: ; Sum: 0</div>
<div class="a" style="left:175.60px;top:481.45px;font-size:6.2px;color:#d2d2d2;transform:scaleX(0.850);">Gennemsnit; Sum</div>
<div class="a" style="left:831.70px;top:481.45px;font-size:6.2px;color:#d2d2d2;transform:scaleX(0.832);">100%</div>
<div class="sep" style="left:33.7px;top:481px;height:6px;background:#4c4c4c"></div>
<div class="sep" style="left:81.8px;top:481px;height:6px;background:#4c4c4c"></div>
<div class="sep" style="left:111.7px;top:481px;height:6px;background:#4c4c4c"></div>
<div class="sep" style="left:171.6px;top:481px;height:6px;background:#4c4c4c"></div>
<div class="sep" style="left:229.4px;top:481px;height:6px;background:#4c4c4c"></div>
<div class="sep" style="left:796.4px;top:481px;height:6px;background:#4c4c4c"></div>
<svg class="i" style="left:103.2px;top:483.2px" width="4" height="3" viewBox="0 0 4 3"><path d="M0.2 0.3 H3.8 L2 2.4 Z" fill="#e0e0e0"/></svg>
<svg class="i" style="left:220.6px;top:483.2px" width="4" height="3" viewBox="0 0 4 3"><path d="M0.2 0.3 H3.8 L2 2.4 Z" fill="#e0e0e0"/></svg>
<svg class="i" style="left:847px;top:483.2px" width="4" height="3" viewBox="0 0 4 3"><path d="M0.2 0.3 H3.8 L2 2.4 Z" fill="#e0e0e0"/></svg>
<svg class="i" style="left:803.2px;top:481.4px" width="7" height="6.4" viewBox="0 0 7 6.4"><circle cx="3" cy="3" r="2.6" fill="#0e0e0e" stroke="#cfcfcf" stroke-width="0.7"/><rect x="2.6" y="1.6" width="0.9" height="2.8" fill="#3f7fd8"/><path d="M5 5 L6.6 6.4" stroke="#cfcfcf" stroke-width="0.8"/></svg>
<div class="a" style="left:819px;top:484.2px;width:4.8px;height:0.8px;background:#a9a9a9"></div>
<svg class="i" style="left:859.6px;top:482px" width="4.8" height="4.8" viewBox="0 0 4.8 4.8"><path d="M2.4 0 V4.8 M0 2.4 H4.8" stroke="#a9a9a9" stroke-width="0.8"/></svg>
</body></html>
